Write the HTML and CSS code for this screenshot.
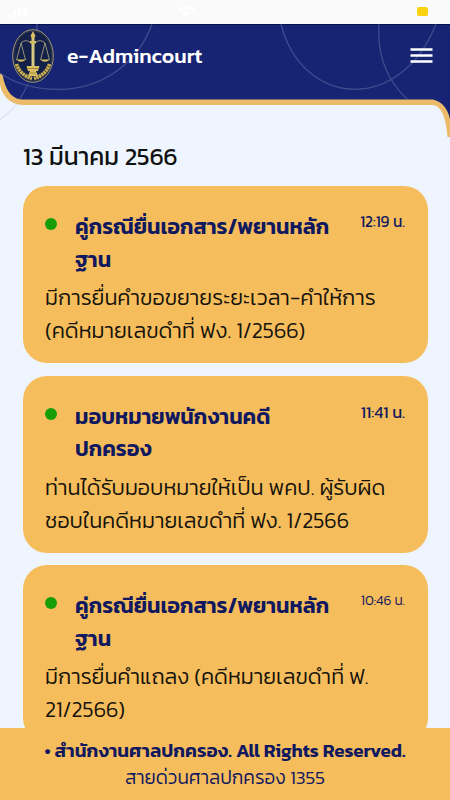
FILE: index.html
```html
<!DOCTYPE html>
<html lang="th">
<head>
<meta charset="utf-8">
<title>e-Admincourt</title>
<link rel="stylesheet" href="styles.css">
</head>
<body>
<div class="app">
  <div class="status">
    <svg width="450" height="24" viewBox="0 0 450 24" aria-hidden="true">
      <g fill="#fff"><path d="M8 14h3v3H8zM13 11h3v6h-3zM18 9h3v8h-3zM23 7h4v10h-4z"/><path d="M177 9q9-6 18 0l-2 2q-7-5-14 0zM181 13q5-4 10 0l-5 5z"/></g>
      <rect x="417" y="7" width="11" height="9" rx="2" fill="#fad20f"/>
    </svg>
  </div>
  <header class="header">
    <svg class="backdrop" width="450" height="116" viewBox="0 24 450 116" aria-hidden="true">
      <path class="page-bg" d="M0 74C1 91 9 102 24 102H433Q448 106 450 137V140H0Z"/>
      <path class="navy" d="M0 24H450V137C447 113 442 101 432 100.500H24C10 100 3 91 1 74H0Z"/>
      <path class="edge" d="M0 24H450V25H0Z"/>
      <g class="rings"><path d="M0 73Q22 89 59 89.500C104 89 139 61 152 24M281 24C302 107 400 115 436 24M379 24Q376 70 407 99M37 24V30M28 84Q24 92 20 99"/><path class="faint" d="M18 103Q10 112 0 120"/></g>
      <path class="gold" d="M0 74C3 74 3 77 4 81C7 92 13 99.600 23 99.600H433C443 102 448 110 450 119V137H447.500C446 117 441 105 432 105H22C9 104 1 94 0 84Z"/>
    </svg>
    <div class="bar">
      <svg class="emblem" width="42" height="54" viewBox="0 0 42 54" aria-hidden="true">
        <ellipse cx="21" cy="27" rx="20.300" ry="26.300" fill="#132048" stroke="#a49a70" stroke-width="1"/>
        <ellipse cx="21" cy="27" rx="19" ry="25" fill="none" stroke="#4f5058" stroke-width=".5"/>
        <g fill="none" stroke="#b5ae88" stroke-width=".8"><path d="M9 14Q13 10 18 13L21 14L24 13Q29 10 33 14M9 14L4.500 31M9 14L13.500 31M33 14L28.500 31M33 14L37.500 31"/><path d="M21 5V39" stroke="#d9ca82" stroke-width="3"/></g>
        <path d="M4 30.500H14Q9 35 4 30.500M28 30.500H38Q33 35 28 30.500M14.500 37H27.500L26 42H24L26 47H16L18 42H16ZM21 2L23.500 7L21 10L18.500 7ZM18 12H24V14.500H18Z" fill="#d9bd60"/>
        <path d="M4.500 35Q8 46 20 49.500M37.500 35Q34 46 22 49.500" fill="none" stroke="#ccb04f" stroke-width="3.600" stroke-dasharray="2.400 .5"/>
        <path d="M16 39.500H26M18 44H24" stroke="#8a762f" stroke-width=".7"/>
      </svg>
      <h1 class="brand">e-Admincourt</h1>
      <svg class="menu" width="23" height="18" viewBox="0 0 23 18" aria-label="menu"><path d="M.5 2.500H22.500M.5 8.500H22.500M.5 14.500H22.500" stroke="#fff" stroke-width="2.600"/></svg>
    </div>
  </header>
  <main class="main">
    <h2 class="date">13 มีนาคม 2566</h2>
    <article class="card">
      <div class="head"><i class="dot"></i><h3 class="title">คู่กรณียื่นเอกสาร/พยานหลัก<br>ฐาน</h3><time class="time">12:19 น.</time></div>
      <p class="text">มีการยื่นคำขอขยายระยะเวลา-คำให้การ<br>(คดีหมายเลขดำที่ ฟง. 1/2566)</p>
    </article>
    <article class="card">
      <div class="head"><i class="dot"></i><h3 class="title">มอบหมายพนักงานคดี<br>ปกครอง</h3><time class="time time-large">11:41 น.</time></div>
      <p class="text">ท่านได้รับมอบหมายให้เป็น พคป. ผู้รับผิด<br>ชอบในคดีหมายเลขดำที่ ฟง. 1/2566</p>
    </article>
    <article class="card">
      <div class="head"><i class="dot"></i><h3 class="title">คู่กรณียื่นเอกสาร/พยานหลัก<br>ฐาน</h3><time class="time time-small">10:46 น.</time></div>
      <p class="text">มีการยื่นคำแถลง (คดีหมายเลขดำที่ ฟ.<br>21/2566)</p>
    </article>
  </main>
  <footer class="footer"><p class="rights">• สำนักงานศาลปกครอง. All Rights Reserved.</p><p class="hotline">สายด่วนศาลปกครอง 1355</p></footer>
</div>
</body>
</html>
```
FILE: styles.css
```css
* { box-sizing: border-box; margin: 0; padding: 0; }
body { font-family: Kanit, "Noto Sans Thai", "Noto Sans", sans-serif; background: #eef5ff; }
.app { width: 450px; height: 800px; overflow: hidden; display: flex; flex-direction: column; position: relative; }
.status { height: 24px; background: #fafafa; flex: none; }
.status svg { display: block; }
.header { height: 116px; flex: none; position: relative; }
.backdrop { position: absolute; inset: 0; }
.page-bg { fill: #eef5ff; }
.navy { fill: #172474; }
.edge { fill: #07104f; }
.gold { fill: #ebbb69; }
.rings { fill: none; stroke: #8d96bd; stroke-width: 1.300; stroke-opacity: .35; }
.faint { stroke: #d9dde5; stroke-opacity: .7; }
.bar { position: relative; display: flex; align-items: center; height: 64px; padding: 0 17.500px 0 12px; }
.brand { flex: 1; margin-left: 13px; font-size: 21.200px; font-weight: 500; line-height: 30px; color: #fff; white-space: nowrap; }
.main { padding: 0 22px 0 23px; flex: none; }
.date { height: 46px; line-height: 33px; font-size: 24.400px; font-weight: 400; color: #111; }
.card { height: 177px; margin-bottom: 12.600px; border-radius: 24px; background: #f6bd5c; padding: 24px 23px 24px 22px; }
.head { display: flex; height: 71px; }
.dot { width: 12px; height: 12px; border-radius: 50%; background: #169d08; margin-top: 8px; }
.title { flex: 1; margin-left: 18px; font-size: 21.500px; line-height: 32.500px; font-weight: 600; color: #10185f; white-space: nowrap; }
.time { font-size: 15.400px; line-height: 24px; font-weight: 400; color: #10185f; white-space: nowrap; }
.time-large { font-size: 16.400px; }
.time-small { font-size: 13.700px; line-height: 22px; font-weight: 300; }
.text { font-size: 21.700px; line-height: 33px; font-weight: 300; color: #17140c; white-space: nowrap; }
.footer { position: absolute; left: 0; right: 0; bottom: 0; height: 72px; background: #f6bd5c; text-align: center; color: #10185f; padding-top: 9px; }
.rights { font-size: 18.800px; line-height: 27px; font-weight: 600; white-space: nowrap; }
.hotline { font-size: 19px; line-height: 27px; font-weight: 300; }
```
